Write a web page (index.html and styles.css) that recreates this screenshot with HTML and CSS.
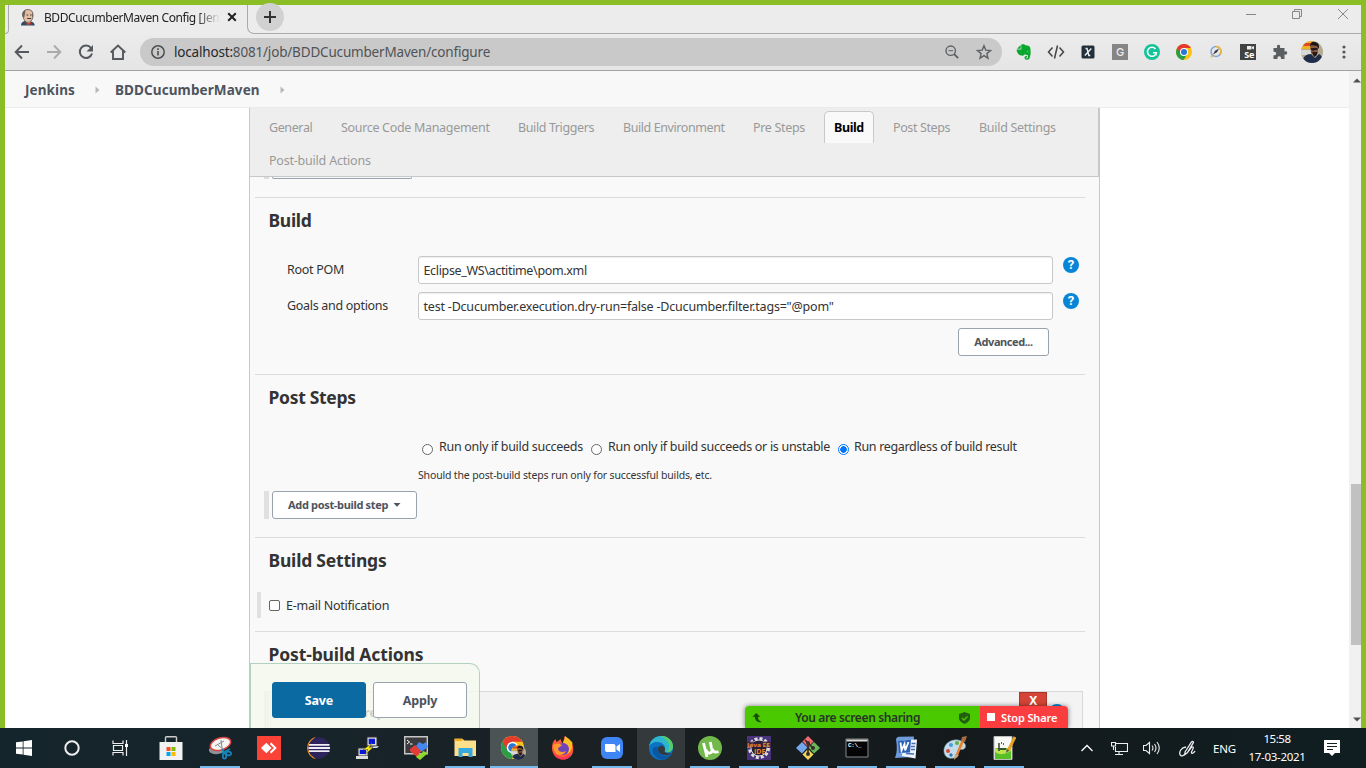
FILE: index.html
```html
<!DOCTYPE html>
<html lang="en">
<head>
<meta charset="utf-8">
<title>BDDCucumberMaven Config [Jenkins]</title>
<link rel="stylesheet" href="styles.css">
</head>
<body>
<div class="frame">
  <header class="tabstrip">
    <div class="edge-left"></div>
    <div class="browser-tab">
      <svg class="favicon" width="16" height="17" viewBox="0 0 16 17"><path d="M1 16.500c0-3 2-4 4-4.500l6 .5c2 .6 3.500 1.500 3.800 4z" fill="#2f4a63"/><path d="M5.500 12 8 15.800 11 12z" fill="#f3f3f3"/><path d="M3 5C3 1.800 5 .5 8 .5s5 1.800 5 5-.5 5-2 6.500-4.300 2-5.800.3S3 8.500 3 5z" fill="#e0bfa5" stroke="#4d4440" stroke-width=".7"/><path d="M2.500 7.500C1.400 4 3 2 5.500 1L5 5 4 9z" fill="#6d625c"/><path d="M12 3q1.500 2 1 5.500l-1-1z" fill="#6d625c"/><path d="M6.500 6h1.800M10 6h1.600M7.200 9.500h4" stroke="#493c35" stroke-width="1"/><path d="m6.500 13 2.300 1.200 2.500-1.200v3l-2.500-1-2.300 1z" fill="#cf3728"/></svg>
      <span class="tab-title">BDDCucumberMaven Config [Jen</span>
      <svg width="10" height="10" viewBox="0 0 10 10"><path d="m1.200 1.200 7.600 7.600m0-7.600L1.200 8.800" stroke="#222" stroke-width="2"/></svg>
    </div>
    <div class="edge-right">
      <div class="new-tab"><svg width="12" height="12" viewBox="0 0 12 12"><path d="M6 0v12M0 6h12" stroke="#333" stroke-width="2"/></svg></div>
      <div class="window-buttons">
        <svg width="10" height="12" viewBox="0 0 10 12"><path d="M0 6.500h10" stroke="#888"/></svg>
        <svg width="10" height="12" viewBox="0 0 10 12"><path d="M.5 3.500h7v7h-7zM2.500 3.500v-2h7v7h-2" fill="none" stroke="#888"/></svg>
        <svg width="10" height="12" viewBox="0 0 10 12"><path d="m0 1 10 10M10 1 0 11" stroke="#888"/></svg>
      </div>
    </div>
  </header>

  <div class="toolbar">
    <div class="nav-icons">
      <span class="tool"><svg width="16" height="16" viewBox="0 0 16 16"><path d="M15 8H2M8 1.500 1.700 8 8 14.500" fill="none" stroke="#55585c" stroke-width="1.900"/></svg></span>
      <span class="tool"><svg width="16" height="16" viewBox="0 0 16 16"><path d="M1 8h13M8 1.500 14.300 8 8 14.500" fill="none" stroke="#aaa" stroke-width="1.900"/></svg></span>
      <span class="tool"><svg width="16" height="16" viewBox="0 0 16 16"><path d="M13 4A6.200 6.200 0 1 0 14 9.500" fill="none" stroke="#55585c" stroke-width="2"/><path d="M15 1v6.500H8.500z" fill="#55585c"/></svg></span>
      <span class="tool"><svg width="16" height="16" viewBox="0 0 16 16"><path d="M.7 8.500 8 1.500l7.300 7M3 7v8h10V7" fill="none" stroke="#55585c" stroke-width="1.900"/></svg></span>
    </div>
    <div class="omnibox">
      <svg width="14" height="14" viewBox="0 0 14 14"><circle cx="7" cy="7" r="6.200" fill="none" stroke="#4c4f52" stroke-width="1.500"/><path d="M7 6v4.500M7 3.300v1.600" stroke="#4c4f52" stroke-width="1.600"/></svg>
      <span class="url"><b>localhost:</b>8081/job/BDDCucumberMaven/configure</span>
      <svg width="14" height="14" viewBox="0 0 14 14"><circle cx="5.700" cy="5.700" r="4.700" fill="none" stroke="#5f6266" stroke-width="1.400"/><path d="m9 9 4.200 4.200" stroke="#5f6266" stroke-width="1.800"/><path d="M3.500 5.700H8" stroke="#5f6266"/></svg>
      <svg class="star" width="16" height="16" viewBox="0 0 16 16"><path d="m8 1.700 1.800 4.400 4.700.4-3.600 3.100 1.100 4.600L8 11.700l-4 2.500 1.100-4.600-3.600-3.100 4.700-.4z" fill="none" stroke="#5f6266" stroke-width="1.400"/></svg>
    </div>
    <div class="extensions">
      <span class="tool"><svg width="16" height="16" viewBox="0 0 16 16"><path d="M1 4.800 4.700 1v3.800z" fill="#08a82f"/><path d="M5.300.5C8 0 9 .8 9.500 1.300c3 .2 4.300.8 4.700 2.500.9 4 .4 8-1 11.200-1.300 1.200-4.500 1-4.700-1-.1-1.800 1.300-2.300 2.600-2v1.200c-1 0-1.400.4-1.200.9.400.6 1.700.3 2-.4l.2-2.400c-1.600 0-2.600-.5-3.100-1.300-.7 1.600-2 1.900-4 1.500C2 10.800.8 8.500.6 5.500h4.700z" fill="#08a82f"/><path d="M10.800 7.300q.8-1.300 1.700.2z" fill="#ebebeb"/></svg></span>
      <span class="tool"><svg width="18" height="16" viewBox="0 0 18 16"><path d="M5.500 3.500 1.500 8l4 4.500M12.500 3.500l4 4.500-4 4.500M10.500 1.500l-3 13" fill="none" stroke="#444" stroke-width="1.500"/></svg></span>
      <span class="tool"><svg width="14" height="14" viewBox="0 0 14 14"><rect x=".5" y=".5" width="13" height="13" rx="1.500" fill="#22303b"/><path d="M4.500 3.500H6l1.800 7h1.500M10.300 3.500 3.800 10.500" fill="none" stroke="#e9eff4" stroke-width="1.400"/></svg></span>
      <span class="tool"><span class="ext-g">G</span></span>
      <span class="tool"><svg width="16" height="16" viewBox="0 0 16 16"><circle cx="8" cy="8" r="8" fill="#15c39a"/><path d="M11.500 5A4.500 4.500 0 1 0 12.400 8.800H9M12 8.500v3" fill="none" stroke="#fff" stroke-width="1.500"/></svg></span>
      <span class="tool"><svg width="16" height="16" viewBox="0 0 16 16"><use href="#chrome"/></svg></span>
      <span class="tool"><svg width="14" height="14" viewBox="0 0 14 14"><circle cx="7" cy="6.500" r="5" fill="none" stroke="#7da7e0" stroke-width="1.600"/><path d="M7 1.500a5 5 0 0 1 4 8M3 9.500l-.5 3" fill="none" stroke="#f2b632" stroke-width="1.600"/><path d="m4 9.500 2-3.700L10 3.500 8 7.200z" fill="#333a48"/></svg></span>
      <span class="tool"><span class="ext-se"><svg width="7" height="4" viewBox="0 0 7 4"><path d="M0 0h4.500v3.500H0zM5 1l2-1v3.500L5 2.500z" fill="#eee"/></svg><i>Se</i></span></span>
      <span class="tool"><svg width="16" height="16" viewBox="0 0 16 16"><path d="M1.500 4h3.700C4.500 1.500 5.200.7 6.500.7S8.600 1.500 8 4h4.500v3.500c2-.5 2.700.3 2.700 1.500s-.8 2-2.700 1.500V15H9c.2-2-.7-2.700-1.800-2.700S5.200 13 5.500 15h-4v-3.700c2 .2 2.700-.7 2.700-1.800S3.400 7.600 1.500 7.800z" fill="#5a5d61"/></svg></span>
      <span class="tool"><svg width="22" height="22" viewBox="0 0 22 22"><use href="#avatar"/></svg></span>
      <span class="tool"><svg width="4" height="14" viewBox="0 0 4 14"><circle cx="2" cy="2" r="1.600" fill="#55585c"/><circle cx="2" cy="7" r="1.600" fill="#55585c"/><circle cx="2" cy="12" r="1.600" fill="#55585c"/></svg></span>
    </div>
  </div>

  <div class="viewport">
    <main class="page">
      <nav class="breadcrumb">
        <b class="crumb-home">Jenkins</b>
        <svg width="5" height="8" viewBox="0 0 5 8"><path d="m.5.500 4 3.500-4 3.500z" fill="#b8b8b8"/></svg>
        <b class="crumb-job">BDDCucumberMaven</b>
        <svg width="5" height="8" viewBox="0 0 5 8"><path d="m.5.500 4 3.500-4 3.500z" fill="#b8b8b8"/></svg>
      </nav>
      <div class="config">
        <div class="section-tabs">
          <a class="t-general">General</a><a class="t-scm">Source Code Management</a><a class="t-triggers">Build Triggers</a><a class="t-env">Build Environment</a><a class="t-pre">Pre Steps</a><a class="active">Build</a><a class="t-post">Post Steps</a><a class="t-settings">Build Settings</a><a class="t-actions">Post-build Actions</a>
        </div>
        <div class="cut-row"><i></i><div></div></div>

        <section class="build">
          <h2>Build</h2>
          <div class="field">
            <label>Root POM</label>
            <div class="input">Eclipse_WS\actitime\pom.xml</div>
            <span class="help">?</span>
          </div>
          <div class="field">
            <label>Goals and options</label>
            <div class="input goals">test -Dcucumber.execution.dry-run=false -Dcucumber.filter.tags="@pom"</div>
            <span class="help">?</span>
          </div>
          <div class="button advanced">Advanced...</div>
        </section>

        <section class="post-steps">
          <h2>Post Steps</h2>
          <div class="radios">
            <i class="radio"></i><span class="r1">Run only if build succeeds</span>
            <i class="radio"></i><span class="r2">Run only if build succeeds or is unstable</span>
            <i class="radio on"></i><span class="r3">Run regardless of build result</span>
          </div>
          <p class="hint">Should the post-build steps run only for successful builds, etc.</p>
          <div class="add-row"><i class="grip"></i><div class="button add">Add post-build step<svg width="8" height="4" viewBox="0 0 8 4"><path d="M.5 0h7L4 3.700z" fill="#4d545d"/></svg></div></div>
        </section>

        <section class="settings">
          <h2>Build Settings</h2>
          <div class="check-row"><i class="grip"></i><i class="checkbox"></i>E-mail Notification</div>
        </section>

        <section class="actions">
          <h2>Post-build Actions</h2>
          <div class="action-row"><i class="grip"></i><div class="action-card"><b class="card-title">rep</b><b class="delete">X</b><span class="help card-help"></span></div></div>
        </section>

        <div class="save-bar">
          <div class="save">Save</div>
          <div class="apply">Apply</div>
        </div>
      </div>
    </main>
    <div class="scrollbar">
      <svg width="8" height="5" viewBox="0 0 8 5"><path d="M0 4.500 4 .5l4 4z" fill="#505050"/></svg>
      <div class="thumb"></div>
      <svg width="8" height="5" viewBox="0 0 8 5"><path d="M0 .5h8l-4 4z" fill="#505050"/></svg>
    </div>
  </div>
</div>

<div class="share-bar">
  <div class="share-status">
    <svg width="10" height="12" viewBox="0 0 10 12"><path d="m.3 4.800 4-3.800 4 3.800H6c-.1 2.500.8 4 3.700 5.200C5.500 11 3 8.500 2.800 4.800z" fill="#175005"/></svg>
    <span>You are screen sharing</span>
    <svg width="11" height="12" viewBox="0 0 11 12"><path d="M5.500 0 11 2v4c0 3-3 5-5.500 6C3 11 0 9 0 6V2z" fill="#226010"/><path d="m3 6 2 2 3.500-3.500" fill="none" stroke="#4dc600" stroke-width="1.300"/></svg>
  </div>
  <div class="share-stop"><i></i>Stop Share</div>
</div>

<footer class="taskbar">
  <div class="task sys"><svg width="16" height="16" viewBox="0 0 16 16"><path d="M0 2.300 6.700 1.400v6.200H0zM7.500 1.300 16 0v7.600H7.500zM0 8.400h6.700v6.200L0 13.700zM7.500 8.400H16V16l-8.500-1.300z" fill="#fff"/></svg></div>
  <div class="task sys"><svg width="16" height="16" viewBox="0 0 16 16"><circle cx="8" cy="8" r="6.700" fill="none" stroke="#eee" stroke-width="2"/></svg></div>
  <div class="task sys"><svg width="17" height="16" viewBox="0 0 17 16"><path d="M1 .5v3h10v-3M1 15.500v-3h10v3M1.500 5.500h9v5h-9zM14.500 0v16" fill="none" stroke="#eee" stroke-width="1.200"/><path d="M13 4h3v3h-3z" fill="#fff"/></svg></div>
  <div class="gap"></div>
  <div class="task"><svg width="24" height="24" viewBox="0 0 24 24"><path d="M6.500 7V1.500Q6.500.700 7.500.700h9q1 0 1 .800V7" fill="none" stroke="#ccc" stroke-width="1.400"/><path d="M.5 6h23v18H.5z" fill="#f2f2f2"/><path d="M7.500 11h4v4h-4z" fill="#f35325"/><path d="M12.500 11h4v4h-4z" fill="#81bc06"/><path d="M7.500 16h4v4h-4z" fill="#05a6f0"/><path d="M12.500 16h4v4h-4z" fill="#ffba08"/></svg></div>
  <div class="task open"><svg width="24" height="24" viewBox="0 0 24 24"><path d="M1 13c2-2 5-3 13-2l2 5c-5 3-13 3-15-1z" fill="#8d9299"/><ellipse cx="12.500" cy="8" rx="10.500" ry="6" transform="rotate(-18 12.500 8)" fill="#f5f5f5" stroke="#d64540" stroke-width="1.500"/><path d="m7 10 9-5M13 4l1 8M10 9l6 5" stroke="#888"/><g fill="none" stroke="#1784b8" stroke-width="1.800"><path d="m14 13 3 5M22 13l-8 4"/><ellipse cx="16.500" cy="20" rx="1.700" ry="2.700"/><ellipse cx="20.500" cy="17.500" rx="2.500" ry="1.800"/></g></svg></div>
  <div class="task"><svg width="24" height="24" viewBox="0 0 24 24"><path d="M0 0h24v24H0z" fill="#fb4237"/><path d="m9.300 6.700 5.300 5.300-5.300 5.300L4 12z" fill="#fff"/><path d="m13.500 7.200 4.800 4.800-4.800 4.800" fill="none" stroke="#fff" stroke-width="2"/></svg></div>
  <div class="task"><svg width="24" height="24" viewBox="0 0 24 24"><path d="M10 .8A11.500 11.500 0 0 0 10 23.200 14 14 0 0 1 10 .8z" fill="#f5901e"/><circle cx="13" cy="12" r="10.700" fill="#2e245d"/><path d="M3 8.800h20.500M2.500 12H24M3 15.200h20.500" stroke="#f0edf8" stroke-width="1.800"/></svg></div>
  <div class="task"><svg width="24" height="24" viewBox="0 0 24 24"><path d="M12 1h10v9H12zM3 12h10v8H3z" fill="#ddd" stroke="#333"/><path d="M13.700 2.700H20V8h-6.300zM4.700 13.700H11V18H4.700z" fill="#0716d8"/><path d="m13 11 11-1-2 2H12zM1 20h12v3H1z" fill="#ddd"/><path d="m17 7-9 7 5-.5-3 5 8-7-4 .3z" fill="#fff100" stroke="#444" stroke-width=".5"/></svg></div>
  <div class="task"><svg width="24" height="24" viewBox="0 0 24 24"><path d="M.7.700h22.600v17H.7z" fill="#3b3b3f" stroke="#c7c7c7" stroke-width="1.400"/><path d="m3 4 2.500 2L3 8M6 8h2.500" fill="none" stroke="#fff"/><path d="m12 10 3-4 4 2 3-2 2 5-7 5z" fill="#4589f0"/><path d="m6 13 5-4 3 3 3 3-2 3 1 4-3-1-7-6z" fill="#e63c37"/><path d="m14 19 4-2 1-2 5 2-8 7-4-3z" fill="#8fd62d"/></svg></div>
  <div class="task open"><svg width="24" height="24" viewBox="0 0 24 24"><path d="M1.500 3h8l2 1.500h11.500V20H1.500z" fill="#ffe08a"/><path d="M1.500 2.500h8V5h-8z" fill="#f1af26"/><path d="M5.500 12h14v9h-4v-4h-6v4h-4z" fill="#37a9e1"/></svg></div>
  <div class="task open hot"><svg width="25" height="25" viewBox="0 0 25 25"><svg width="23" height="23" viewBox="0 0 16 16"><use href="#chrome"/></svg><svg x="10" y="9" width="15" height="15" viewBox="0 0 22 22"><use href="#avatar"/></svg></svg></div>
  <div class="task"><svg width="24" height="24" viewBox="0 0 24 24"><path d="M1 12C1 8 2 5 4.500 3l1 3 3-2 1-1 1.500 4c3-1 1-5 3-7 1.500 3 6 4.500 7.500 8.500C24.500 17 19 23.500 12 23.500S1 18 1 12z" fill="#ff5a37"/><path d="M12 6c1-2 2-3 2-6 4 3 9 6 9 12 0-3-1-4-2-5 1 8-3 11-8 11 3-2 4-5 3-8z" fill="#ffbd25"/><circle cx="12" cy="13" r="6" fill="#7043b8"/><path d="M2 9c3-2 6-2 9 0-1 2-4 2-4 4 1 3 4 4 8 2-2 5-9 5-11 1-1-2-2-4-2-7z" fill="#ff9a2e"/><path d="M2 14c1 5 6 8 11 7s7-4 7-4c-1 6-6 7-9 6.500C6 23 2 19 2 14z" fill="#fd3259"/></svg></div>
  <div class="task open"><svg width="24" height="24" viewBox="0 0 24 24"><rect x="1" y="1" width="22" height="22" rx="6" fill="#3e86f6"/><path d="M5 8h8.500q2 0 2 2v6H7q-2 0-2-2zM16.500 10.500 20 8v8l-3.500-2.500z" fill="#fff"/></svg></div>
  <div class="task warm"><svg width="24" height="24" viewBox="0 0 24 24"><circle cx="12" cy="12" r="12" fill="#0c72c4"/><path d="M0 11C1 4 6 0 12 0c7 0 12 5 12 10.500 0 5-5 6.500-8 5.500-2-.7 0-1.500 0-4 0-3-3-6-7.500-6S1 8 0 11z" fill="#2fb5d0"/><path d="M11 0c8-.5 13 5 13 10.500 0 4-3 6-6 5.800C23 10 19 3 11 0z" fill="#55ce69"/><path d="M9 11c-1 4 2 9 7 9 3 0 5-1 6.500-2.500C18 25 10 25 6 20s-3-10 3-9z" fill="#0b58a2"/><path d="M9.500 11c-1.500 4 1 7 5 8 3 .6 7-.5 8.800-2-5 1-8.800-.5-7.300-3 1-3-4-6-6.500-3z" fill="#343a3b"/></svg></div>
  <div class="task open"><svg width="24" height="24" viewBox="0 0 24 24"><circle cx="12" cy="12" r="12" fill="#72b84a"/><path d="m5.500 7 3.500 14M7.700 13.500q1.500 4 4.300 3.500 3-1 1.500-5L12.300 6M14.200 13q1.500 4.500 6.300 2.500" fill="none" stroke="#fff" stroke-width="2.800"/></svg></div>
  <div class="task open"><svg width="24" height="24" viewBox="0 0 24 24"><path d="M0 0h24v24H0z" fill="#49347b"/><circle cx="12" cy="12" r="9.500" fill="none" stroke="#ddd" stroke-width="3" stroke-dasharray="3 2"/><circle cx="12" cy="12" r="8" fill="#271b36" stroke="#ddd"/><path d="M0 5.500h24v6H0z" fill="#33233f" opacity=".8"/><text class="ee" x="0" y="11" textLength="23" lengthAdjust="spacingAndGlyphs">Java EE</text><text class="ee big" x="7" y="18">IDE</text></svg></div>
  <div class="task open"><svg width="24" height="24" viewBox="0 0 24 24"><path d="m12 0 5.500 5.500L12 11 6.500 5.500z" fill="#f36a6e"/><path d="m6 6 5.500 5.500L6 17.500 0 12z" fill="#75a7ee"/><path d="m18 6 6 6-6 5.500-5.500-6z" fill="#68b95b"/><path d="m12 13 5.500 5.500L12 24l-5.500-5.500z" fill="#f2d65d"/><path d="M12 7v11M9 4l8 8" stroke="#392d2a" stroke-width="1.700"/><circle cx="12" cy="7" r="2" fill="#392d2a"/><circle cx="17" cy="12" r="2" fill="#392d2a"/><circle cx="12" cy="18" r="2" fill="#392d2a"/></svg></div>
  <div class="task open"><svg width="24" height="24" viewBox="0 0 24 24"><path d="M1 3h22v18H1z" fill="#050505" stroke="#888"/><path d="M1.500 3.500h21v2h-21z" fill="#d9d9d9"/><text class="cmd" x="3" y="11">C:\_</text></svg></div>
  <div class="task open"><svg width="24" height="24" viewBox="0 0 24 24"><path d="M2 3Q3 .8 5 .8L20 .5 19 21 1 22Q4 15 2 3z" fill="#6f9cdb"/><path d="m9 4 14-.5-1.500 19L8 20z" fill="#eef3fb"/><path d="m4 5 13-1.500-1 13-11 .5z" fill="#2b62b8"/><path d="m6.500 6.500 1 8 3-6.500.7 6.500 3.300-8.500" fill="none" stroke="#fff" stroke-width="1.800"/><path d="M17.500 7.500h4M17 10.500h4M17 13.500h4M12 17.500l8 .5" stroke="#486eaf" stroke-width="1.500"/></svg></div>
  <div class="task open"><svg width="24" height="24" viewBox="0 0 24 24"><path d="M1 16C0 8 8 3 15 4c6 1 9 5 7 8s-5 0-7 3 2 6-4 7S2 21 1 16z" fill="#c4dce9" stroke="#7798a8" stroke-width=".6"/><circle cx="5" cy="15" r="2" fill="#d94835"/><circle cx="8" cy="9" r="2" fill="#4b9dd7"/><circle cx="14" cy="7" r="2" fill="#60af45"/><circle cx="18" cy="10" r="1.800" fill="#e9c83c"/><circle cx="8" cy="19" r="1.700" fill="#3279b4"/><path d="m20 4-7 17" stroke="#e58130" stroke-width="2.500"/><path d="m18 5 1-4 5-1-2 6z" fill="#a86c42"/><path d="m11 24 1-6 4 1z" fill="#d0a171"/></svg></div>
  <div class="task open"><svg width="24" height="24" viewBox="0 0 24 24"><path d="M2 .5h18v23H2z" fill="#f8f8f5" stroke="#bbb"/><path d="M3 12h16v11H3z" fill="#58bf28"/><path d="M3 12q8 5 16-2v5q-9 6-16 1z" fill="#bce54e"/><path d="M7 7v8M9 7h1M11 8h1M8 13h6" stroke="#28332a" stroke-width="1.400"/><path d="m23 1-7 14" stroke="#e8a225" stroke-width="3"/><path d="m14.500 13-.3 4 3-2.500z" fill="#555"/></svg></div>
  <div class="tray">
    <svg class="chev" width="12" height="8" viewBox="0 0 12 8"><path d="m.5 7 5.500-5.500L11.500 7" fill="none" stroke="#fff" stroke-width="1.300"/></svg>
    <svg class="net" width="17" height="15" viewBox="0 0 17 15"><path d="M5 2.500h11.500v8H4.500V6M8 10.500v3M4 13.500h8M.5 1.500h4V5h-4zM2.500 5v4" fill="none" stroke="#eee" stroke-width="1.100"/></svg>
    <svg class="vol" width="17" height="14" viewBox="0 0 17 14"><path d="M.5 4.500h2.500l3.500-3v11L3 9.500H.5zM9 4.500q2 2.500 0 5M11.500 3q3 4 0 8M14 1q4.500 6 0 12" fill="none" stroke="#eee" stroke-width="1.100"/></svg>
    <svg class="pen" width="17" height="17" viewBox="0 0 17 17"><path d="M6 12 12.500 2q1.500-1.500 2 .3L8.500 12.500 6 14.500zM7 7C2 7.500 0 12 1 14.500s4 1.500 5-1M9 11.500c2-2 3.500-5.500 5-4.500s-2.500 5-1.500 6 3-1 3.500-2" fill="none" stroke="#eee" stroke-width="1.300"/></svg>
    <span class="eng">ENG</span>
    <div class="clock"><span class="time">15:58</span><span>17-03-2021</span></div>
    <svg width="16" height="16" viewBox="0 0 16 16"><path d="M0 0h16v13h-5l-3 3-3-3H0z" fill="#fff"/><path d="M3 3.500h10M3 6.500h10M3 9.500h6" stroke="#132124"/></svg>
  </div>
</footer>

<svg class="defs" width="0" height="0">
  <defs>
    <g id="chrome"><circle cx="8" cy="8" r="8" fill="#fbc116"/><path d="M8 8 1.100 4A8 8 0 0 0 7.500 16l3.900-6.200z" fill="#289e49"/><path d="M8 4h6.900A8 8 0 0 0 1.100 4L4.500 10z" fill="#e33b2e"/><circle cx="8" cy="8" r="4" fill="#fff"/><circle cx="8" cy="8" r="3" fill="#2876d8"/></g>
    <clipPath id="round"><circle cx="11" cy="11" r="11"/></clipPath>
    <g id="avatar" clip-path="url(#round)"><path d="M0 0h22v22H0z" fill="#b3aa91"/><path d="M0 0h13v8H0z" fill="#f2b31e"/><path d="M2 2h8v3H2z" fill="#df4729"/><path d="M0 9h10v5H0z" fill="#d8d8d4"/><path d="M9 4q4-5 8 1v7l-3 4-4-4z" fill="#8b5a3d"/><path d="M9 6q0-6 5-5t4 7l-2-3-6-1z" fill="#1c1719"/><path d="M9.500 7h7v2h-3l-1 1-2-1zM11 11h5v3l-3 2z" fill="#251b1c"/><path d="M1 22q1-9 9-9l4 4 4-4q4 2 4 9z" fill="#202d4a"/></g>
  </defs>
</svg>
</body>
</html>
```
FILE: styles.css
```css
* { box-sizing: border-box; }
body { margin: 0; width: 1366px; height: 768px; overflow: hidden; font-family: "Noto Sans", "Open Sans", sans-serif; font-size: 12.5px; color: #333; position: relative; white-space: nowrap; letter-spacing: -.3px; }
svg { display: block; flex: none; }
i { font-style: normal; }
.frame { height: 728px; border: 5px solid #8bbd26; border-bottom: 0; display: flex; flex-direction: column; }
.defs { position: absolute; }

/* browser chrome */
.tabstrip { height: 29px; flex: none; display: flex; background: #ececec; }
.edge-left { width: 4px; border-right: 1px solid #aaa; border-bottom: 1px solid #aaa; border-bottom-right-radius: 5px; }
.browser-tab { width: 238px; display: flex; align-items: center; padding: 0 0 5px 11px; }
.tab-title { width: 176px; margin: 0 7px 0 8px; overflow: hidden; font-size: 12px; letter-spacing: -.43px; color: #222; -webkit-mask-image: linear-gradient(90deg, #000 87%, transparent); mask-image: linear-gradient(90deg, #000 87%, transparent); }
.edge-right { flex: 1; display: flex; justify-content: space-between; border-left: 1px solid #aaa; border-bottom: 1px solid #aaa; border-bottom-left-radius: 7px; }
.new-tab { width: 28px; height: 28px; margin: -2px 0 0 8px; border-radius: 50%; background: #d1d1d1; display: flex; align-items: center; justify-content: center; }
.window-buttons { display: flex; gap: 36px; padding: 3px 13px 0 0; }
.toolbar { height: 37px; flex: none; background: linear-gradient(#ebebeb, #e5e5e5); border-bottom: 1px solid #a2a2a2; display: flex; align-items: center; }
.nav-icons, .extensions { display: flex; align-items: center; }
.nav-icons { padding-left: 1px; }
.tool { width: 32px; display: flex; justify-content: center; align-items: center; }
.omnibox { width: 862px; height: 28px; margin: 0 6px; border-radius: 14px; background: #c9c9c9; display: flex; align-items: center; padding: 0 10px 0 11px; }
.url { flex: 1; margin-left: 9px; font-size: 13.500px; letter-spacing: -.18px; color: #505357; }
.url b { font-weight: 400; color: #25282b; }
.star { margin-left: 17px; }
.ext-g { width: 16px; height: 16px; background: #858585; color: #eee; font: 500 11px/16px Inter, sans-serif; text-align: center; letter-spacing: 0; }
.ext-se { width: 16px; height: 16px; background: #424242; color: #fff; font: bold 9px/10px "Open Sans", sans-serif; display: flex; flex-direction: column; align-items: flex-end; padding: 2px 2px 0 0; }

/* page */
.viewport { flex: 1; min-height: 0; display: flex; }
.page { width: 1344px; background: #fff; display: flex; flex-direction: column; overflow: hidden; }
.breadcrumb { height: 37px; flex: none; background: #f8f8f8; border-bottom: 1px solid #ebebeb; display: flex; align-items: center; padding: 1px 0 0 20px; font-size: 13.500px; letter-spacing: .1px; color: #4d545d; }
.crumb-home { width: 70px; }
.crumb-job { width: 165px; margin-left: 15px; }
.config { position: relative; width: 851px; flex: 1; min-height: 0; overflow: hidden; margin-left: 244px; background: #f9f9f9; border: solid #c8c8c8; border-width: 0 1px; display: flex; flex-direction: column; }
.section-tabs { height: 69px; flex: none; background: #eee; border-bottom: 1px solid #c8c8c8; border-right: 1px solid #c8c8c8; padding: 3px 0 0 19px; display: flex; flex-wrap: wrap; align-content: flex-start; line-height: 33px; color: #999; font-size: 12.500px; letter-spacing: -.39px; }
.section-tabs a { height: 33px; }
.t-general { width: 72px; }
.t-scm { width: 177px; letter-spacing: -.32px; }
.t-triggers { width: 105px; }
.t-env { width: 130px; letter-spacing: -.42px; }
.t-pre { width: 71px; letter-spacing: -.32px; }
.t-post { width: 86px; }
.t-settings { width: 90px; letter-spacing: -.29px; }
.t-actions { width: 105px; letter-spacing: -.21px; }
.section-tabs .active { width: 50px; height: 32px; margin-right: 19px; padding-left: 9px; background: #f9f9f9; border: 1px solid #c8c8c8; border-bottom: 0; border-radius: 5px 5px 0 0; color: #000; font-weight: 700; line-height: 31px; }
.cut-row { height: 20px; flex: none; display: flex; padding-left: 14px; }
.cut-row i { width: 5px; height: 2px; background: #ddd; margin-right: 3px; }
.cut-row div { width: 140px; height: 2px; border: 1px solid #98a3ad; border-top: 0; border-radius: 0 0 3px 3px; }
section { flex: none; margin: 0 14px 0 5px; border-top: 1px solid #dcdcdc; }
h2 { margin: 10px 0 0; padding-left: 13.500px; font-size: 17.500px; line-height: 24px; height: 24px; color: #333; }
.settings h2 { letter-spacing: -.2px; }
.actions h2 { letter-spacing: -.13px; }
.build { height: 177px; }
.field { display: flex; height: 28px; margin-top: 8px; padding-left: 32px; line-height: 28px; }
h2 + .field { margin-top: 24px; }
.field label { width: 131px; }
.input { width: 635px; border: 1px solid #c8c8c8; border-radius: 3px; background: #fff; padding-left: 4.500px; box-shadow: inset 0 1px 1px #eee; line-height: 27px; letter-spacing: -.34px; }
.input.goals { letter-spacing: -.2px; }
.help { width: 16px; height: 16px; margin: 1px 0 0 10px; border-radius: 50%; background: #0786d7; color: #fff; font: bold 13px/16px Roboto, sans-serif; text-align: center; letter-spacing: 0; }
.button { height: 28px; border: 1px solid #98a3ad; border-radius: 3px; background: #fff; color: #4d545d; font-size: 11px; font-weight: 700; line-height: 26px; letter-spacing: -.33px; display: flex; align-items: center; }
.advanced { width: 91px; margin: 8px 0 0 703px; justify-content: center; letter-spacing: -.43px; }
.post-steps { height: 163px; }
.radios { display: flex; align-items: center; padding-left: 166px; height: 20px; margin-top: 27px; }
.radio { width: 11px; height: 11px; border: 1px solid #666; border-radius: 50%; background: #fff; margin: 6px 6px 0 1px; flex: none; }
.radio.on { border-color: #0075ff; background: radial-gradient(#0075ff 0 3px, #fff 3.500px); margin-right: 5px; }
.r1 { width: 151px; }
.r2 { width: 229px; }
.r3 { letter-spacing: -.33px; }
.hint { margin: 10px 0 0 163px; font-size: 10.500px; line-height: 18px; height: 18px; letter-spacing: -.16px; }
.add-row { display: flex; margin-top: 7px; padding-left: 9px; }
.grip { width: 5px; background: #e0e0e0; margin-right: 3px; }
.add { width: 145px; padding-left: 15px; gap: 5px; }
.settings { height: 94px; }
.check-row { display: flex; align-items: center; height: 26px; margin: 20px 0 0 2px; letter-spacing: -.24px; }
.check-row .grip { height: 26px; width: 4px; margin-right: 8px; }
.checkbox { width: 11px; height: 11px; border: 1px solid #666; border-radius: 2px; background: #fff; margin-right: 6px; }
.actions { flex: 1; min-height: 0; overflow: hidden; }
.action-row { display: flex; height: 70px; padding-left: 9px; margin-top: 25px; }
.action-row .grip { width: 5px; margin-right: 1px; }
.action-card { width: 813px; border: 1px solid #d8d8d8; background: #f3f3f3; display: flex; }
.card-title { width: 653px; padding: 11px 0 0 93px; font-size: 13px; }
.delete { width: 28px; height: 24px; margin-left: 95px; background: #d44536; border: 1px solid #a8362b; color: #fff; font-size: 12px; line-height: 15px; text-align: center; }
.card-help { margin: 12px 0 0 2px; }
.save-bar { position: absolute; left: 0; bottom: 0; width: 230px; height: 65px; padding: 18px 0 0 21px; display: flex; gap: 7px; background: rgba(245, 249, 238, .8); border: solid #b1d3bd; border-width: 1px 1px 0 1px; border-top-right-radius: 10px; font-weight: 700; font-size: 12.500px; letter-spacing: -.15px; }
.save, .apply { width: 94px; height: 36px; border-radius: 3px; line-height: 35px; text-align: center; border: 1px solid #98a3ad; background: #fff; color: #4d545d; }
.save { background: #0b6aa2; border-color: #0b6aa2; color: #fff; }
.scrollbar { width: 12px; background: #f1f1f1; overflow: hidden; display: flex; flex-direction: column; padding: 7px 0 6px 4px; }
.thumb { height: 161px; width: 12px; margin: 401px 0 auto -2px; background: #c1c1c1; }

/* meeting overlay */
.share-bar { position: absolute; left: 745px; top: 706px; width: 323px; height: 22px; display: flex; border-radius: 4px 4px 0 0; overflow: hidden; box-shadow: 0 0 5px rgba(0, 0, 0, .5); font-weight: 600; font-size: 12px; }
.share-status { width: 235px; background: #4ac800; color: #273428; display: flex; align-items: center; padding: 1px 10px 0 7px; justify-content: space-between; letter-spacing: -.36px; }
.share-status span { padding-right: 6px; }
.share-stop { flex: 1; background: #fb3d40; color: #fff; display: flex; align-items: center; gap: 6px; padding-left: 7px; font-size: 11px; letter-spacing: -.13px; }
.share-stop i { width: 8px; height: 8px; background: #fff; }

/* taskbar */
.taskbar { height: 40px; background: linear-gradient(90deg, #14252b, #17242a 25%, #1a2022 45%, #141a1c 70%, #101e22); display: flex; position: relative; }
.gap { width: 2px; }
.task { width: 49px; height: 40px; flex: none; display: flex; align-items: center; justify-content: center; }
.task.sys { width: 48px; }
.task.open { background: linear-gradient(#76b9ed, #76b9ed) 5px 38px / 40px 2px no-repeat; }
.task.hot { background: linear-gradient(#76b9ed, #76b9ed) 1px 38px / 48px 2px no-repeat, linear-gradient(#4c5354, #4c5354) 1px 0 / 48px 40px no-repeat; }
.task.warm { background: linear-gradient(#343a3b, #343a3b) 1px 0 / 48px 40px no-repeat; }
.ee { font: bold 6px "Open Sans", sans-serif; fill: #ec8b26; letter-spacing: 0; }
.ee.big { font-size: 7px; }
.cmd { font: bold 6px "Liberation Mono", monospace; fill: #fff; }
.tray { flex: 1; display: flex; align-items: center; padding-left: 53px; color: #fff; font-size: 11.500px; }
.net { margin-left: 18px; }
.vol { margin-left: 15px; }
.pen { margin-left: 19px; }
.eng { width: 24px; margin-left: 17px; letter-spacing: -.17px; }
.clock { width: 58px; margin: 0 18px 0 11px; display: flex; flex-direction: column; align-items: center; line-height: 18px; }
.time { letter-spacing: -.48px; }
```
